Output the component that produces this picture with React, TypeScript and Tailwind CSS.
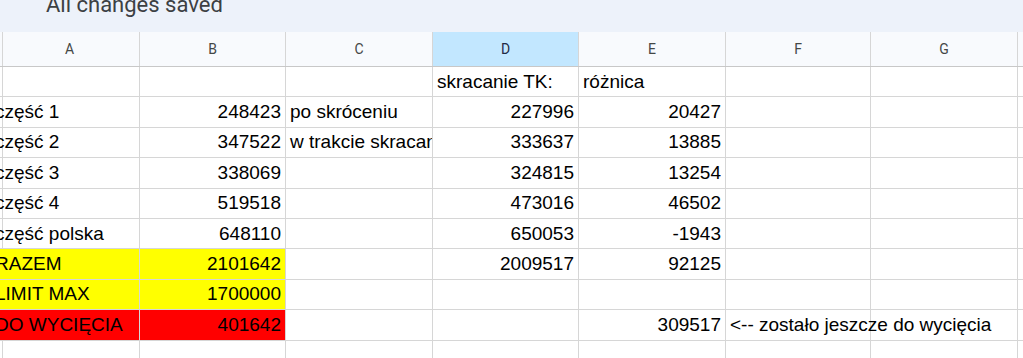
import React from "react";

type Cell = { v?: string; right?: boolean; bg?: string };

const cols = [
  { key: "A", w: "w-[140px]" },
  { key: "B", w: "w-[146px]" },
  { key: "C", w: "w-[147px]" },
  { key: "D", w: "w-[146px]" },
  { key: "E", w: "w-[147px]" },
  { key: "F", w: "w-[145px]" },
  { key: "G", w: "w-[147px]" },
  { key: "H", w: "w-[147px]" },
];

const Y = "bg-[#ffff00]";
const R = "bg-[#ff0000]";

const rows: Cell[][] = [
  [{}, {}, {}, { v: "skracanie TK:" }, { v: "różnica" }],
  [{ v: "część 1" }, { v: "248423", right: true }, { v: "po skróceniu" }, { v: "227996", right: true }, { v: "20427", right: true }],
  [{ v: "część 2" }, { v: "347522", right: true }, { v: "w trakcie skracania" }, { v: "333637", right: true }, { v: "13885", right: true }],
  [{ v: "część 3" }, { v: "338069", right: true }, {}, { v: "324815", right: true }, { v: "13254", right: true }],
  [{ v: "część 4" }, { v: "519518", right: true }, {}, { v: "473016", right: true }, { v: "46502", right: true }],
  [{ v: "część polska" }, { v: "648110", right: true }, {}, { v: "650053", right: true }, { v: "-1943", right: true }],
  [{ v: "RAZEM", bg: Y }, { v: "2101642", right: true, bg: Y }, {}, { v: "2009517", right: true }, { v: "92125", right: true }],
  [{ v: "LIMIT MAX", bg: Y }, { v: "1700000", right: true, bg: Y }, {}, {}, {}],
  [{ v: "DO WYCIĘCIA", bg: R }, { v: "401642", right: true, bg: R }, {}, {}, { v: "309517", right: true }, { v: "<-- zostało jeszcze do wycięcia" }],
  [],
];

export default function App() {
  return (
    <div className="h-[358px] w-[1023px] overflow-hidden bg-white">
      <div className="h-[32px] overflow-hidden bg-[#edf2fa] pl-[46px]">
        <div className="-mt-[6px] font-['Roboto',sans-serif] text-[22px] leading-[22px] text-[#3c4043]">
          All changes saved
        </div>
      </div>

      <div className="flex h-[35px] border-b border-[#c8c8c8] bg-[#f8fafd]">
        {cols.map((c, i) => (
          <div
            key={c.key}
            className={`${c.w} relative flex shrink-0 items-center justify-center border-r border-[#d6d6d6] font-['Roboto',sans-serif] text-[14px] ${
              c.key === "D" ? "bg-[#c2e7ff] text-[#1f2a44]" : "text-[#444746]"
            } ${i === 0 ? "before:absolute before:bottom-0 before:left-[2px] before:top-0 before:w-px before:bg-[#d6d6d6]" : ""}`}
          >
            {c.key}
          </div>
        ))}
      </div>

      {rows.map((row, r) => (
        <div key={r} className="flex h-[30.4px] border-b border-[#d6d6d6]">
          {cols.map((c, i) => {
            const cell = row[i] || {};
            return (
              <div
                key={c.key}
                className={`${c.w} relative flex shrink-0 items-center border-r border-[#d6d6d6] font-['Liberation_Sans',Arial,sans-serif] text-[19px] leading-[22px] text-black ${
                  cell.bg || ""
                } ${cell.right ? "justify-end pr-[4px]" : i === 0 ? "" : "pl-[4px]"} ${
                  i === 0 && !cell.bg
                    ? "before:absolute before:bottom-0 before:left-[2px] before:top-0 before:w-px before:bg-[#d6d6d6]"
                    : ""
                } ${i === 2 ? "overflow-hidden" : "overflow-visible"} ${i === 5 ? "z-10" : ""}`}
              >
                {cell.v && (
                  <span className={`relative whitespace-nowrap ${i === 0 ? "-ml-[5px]" : ""}`}>{cell.v}</span>
                )}
              </div>
            );
          })}
        </div>
      ))}
    </div>
  );
}
